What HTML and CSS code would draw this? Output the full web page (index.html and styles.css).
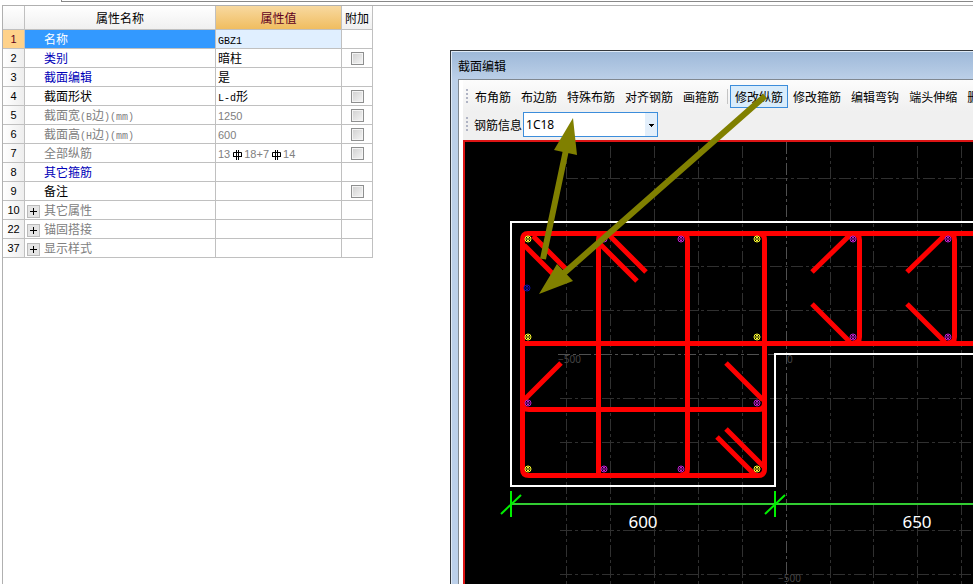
FILE: index.html
```html
<!DOCTYPE html>
<html lang="zh-CN">
<head>
<meta charset="utf-8">
<title>截面编辑</title>
<link rel="stylesheet" href="styles.css">
</head>
<body>
<div class="tabstrip"></div>
<main class="workspace">
  <section class="properties">
    <table class="grid">
      <colgroup><col class="c-num"><col class="c-name"><col class="c-value"><col class="c-extra"></colgroup>
      <thead>
        <tr><th></th><th>属性名称</th><th class="active">属性值</th><th>附加</th></tr>
      </thead>
      <tbody>
        <tr class="selected"><th>1</th><td class="name">名称</td><td class="value"><span class="code">GBZ1</span></td><td></td></tr>
        <tr><th>2</th><td class="name key">类别</td><td class="value">暗柱</td><td class="extra"><input type="checkbox" aria-label="附加 类别"></td></tr>
        <tr><th>3</th><td class="name key">截面编辑</td><td class="value">是</td><td></td></tr>
        <tr><th>4</th><td class="name">截面形状</td><td class="value"><span class="code">L-d</span>形</td><td class="extra"><input type="checkbox" aria-label="附加 截面形状"></td></tr>
        <tr class="muted"><th>5</th><td class="name">截面宽<span class="code">(B</span>边<span class="code">)(mm)</span></td><td class="value"><span class="num">1250</span></td><td class="extra"><input type="checkbox" aria-label="附加 截面宽"></td></tr>
        <tr class="muted"><th>6</th><td class="name">截面高<span class="code">(H</span>边<span class="code">)(mm)</span></td><td class="value"><span class="num">600</span></td><td class="extra"><input type="checkbox" aria-label="附加 截面高"></td></tr>
        <tr class="muted"><th>7</th><td class="name">全部纵筋</td><td class="value"><span class="num">13<svg class="rebar" viewBox="0 0 14 10"><path d="M3.500 2.500H11.500V6.500H3.500ZM6.500 0V10M8.500 0V10M3 6.500H12"/></svg>18+7<svg class="rebar" viewBox="0 0 14 10"><path d="M3.500 2.500H11.500V6.500H3.500ZM6.500 0V10M8.500 0V10M3 6.500H12"/></svg>14</span></td><td class="extra"><input type="checkbox" aria-label="附加 全部纵筋"></td></tr>
        <tr><th>8</th><td class="name key">其它箍筋</td><td></td><td></td></tr>
        <tr><th>9</th><td class="name">备注</td><td></td><td class="extra"><input type="checkbox" aria-label="附加 备注"></td></tr>
        <tr class="muted"><th>10</th><td class="group"><button class="expand" aria-label="展开"></button>其它属性</td><td></td><td></td></tr>
        <tr class="muted"><th>22</th><td class="group"><button class="expand" aria-label="展开"></button>锚固搭接</td><td></td><td></td></tr>
        <tr class="muted"><th>37</th><td class="group"><button class="expand" aria-label="展开"></button>显示样式</td><td></td><td></td></tr>
      </tbody>
    </table>
  </section>

  <section class="window">
    <h1 class="title">截面编辑</h1>
    <div class="client">
      <div class="toolbar">
        <i class="grip"></i>
        <button>布角筋</button><button>布边筋</button><button>特殊布筋</button><button>对齐钢筋</button><button>画箍筋</button>
        <i class="separator"></i>
        <button class="pressed">修改纵筋</button><button>修改箍筋</button><button>编辑弯钩</button><button>端头伸缩</button><button>删</button>
      </div>
      <div class="toolbar second">
        <i class="grip"></i>
        <label for="bar-info">钢筋信息</label>
        <select id="bar-info"><option>1C18</option></select>
      </div>
      <div class="canvas">
        <svg class="drawing" viewBox="465 142 508 442" preserveAspectRatio="xMinYMin slice">
          <defs>
            <g id="bar"><circle r="3" fill="#000" stroke="currentColor"/><path d="M-2 0H2M-1 -1.500H1M-1 1.500H1" stroke="currentColor" fill="none"/></g>
          </defs>
          <g class="guides">
            <path d="M566.500 146V584M610.500 146V584M654.500 146V584M698.500 146V584M742.500 146V584M830.500 146V584M873.500 146V584M917.500 146V584M961.500 146V584"/>
            <path d="M566 178.500H973M560 266.500H973M560 310.500H973M560 398.500H973M560 442.500H973M560 530.500H973M560 574.500H973"/>
            <path class="axis" d="M786.500 142V584M558 354.500H775"/>
          </g>
          <g class="scale">
            <text x="558" y="363">−500</text><text x="787" y="363">0</text><text x="778" y="582">−500</text>
          </g>
          <path class="outline" d="M980 222H511V486H775V354H980"/>
          <g class="stirrups">
            <path d="M980 233.500H528Q522.500 233.500 522.500 240V469Q522.500 475.500 529 475.500H758Q764.500 475.500 764.500 469V240Q764.500 233.500 758 233.500"/>
            <path d="M522.500 343.500H980M522.500 403Q522.500 409.500 529 409.500H758Q764.500 409.500 764.500 403"/>
            <path d="M604 233.500Q598.500 233.500 598.500 240V475M681 233.500Q687.500 233.500 687.500 240V469Q687.500 475 681 475M853 233.500Q859.500 233.500 859.500 240V337Q859.500 343 853 343M948 233.500Q954.500 233.500 954.500 240V337Q954.500 343 948 343"/>
            <path d="M533 236L567 270M524 245L554 275M608 234L646 272M600 244L637 281M851 234L812 272M946 234L907 272M812 304L850 342M907 304L945 342M523 401L561 363M726 363L763 400M726 429L764 467M717 437L755 475"/>
          </g>
          <g color="#ffff30"><use href="#bar" x="528" y="239"/><use href="#bar" x="757" y="239"/><use href="#bar" x="528" y="337"/><use href="#bar" x="757" y="337"/><use href="#bar" x="528" y="469"/><use href="#bar" x="757" y="469"/></g>
          <g color="#c020d0"><use href="#bar" x="604" y="239"/><use href="#bar" x="681" y="239"/><use href="#bar" x="853" y="239"/><use href="#bar" x="948" y="239"/><use href="#bar" x="853" y="337"/><use href="#bar" x="948" y="337"/><use href="#bar" x="528" y="403"/><use href="#bar" x="757" y="403"/><use href="#bar" x="604" y="469"/><use href="#bar" x="681" y="469"/></g>
          <g color="#1010b0"><use href="#bar" x="527" y="288"/></g>
          <g class="dimension">
            <path d="M511 504H980" stroke="#32cd32"/>
            <path d="M511 491V517M501 514L521 495M775 491V517M765 514L785 495"/>
            <text x="643" y="528">600</text><text x="917" y="528">650</text>
          </g>
        </svg>
      </div>
    </div>
    <svg class="arrows" viewBox="450 50 523 534" preserveAspectRatio="xMinYMin slice" aria-hidden="true">
      <path class="shaft" d="M543 259L566 150M765 96L563 274"/>
      <path class="head" d="M573 118L577 155L554 150ZM539 294L557 264L573 281Z"/>
    </svg>
  </section>
</main>
</body>
</html>
```
FILE: styles.css
```css
* { box-sizing: border-box; }

body {
  margin: 0;
  height: 100vh;
  display: flex;
  flex-direction: column;
  overflow: hidden;
  background: #fff;
  color: #000;
  font: 12px/18px "Noto Sans CJK SC", sans-serif;
}

.tabstrip {
  flex: none;
  height: 2px;
  margin: 0 0 3px 61px;
  border-left: 1px solid #888;
  border-bottom: 1px solid #888;
}

.workspace {
  flex: 1;
  min-height: 0;
  display: flex;
  margin-left: 2px;
  border-left: 1px solid #b0b0b0;
  border-top: 1px solid #b0b0b0;
}

/* Property table */
.properties { flex: none; width: 447px; }

.grid {
  width: 370px;
  table-layout: fixed;
  border-collapse: separate;
  border-spacing: 0;
}

.c-num { width: 22px; }
.c-name { width: 191px; }
.c-value { width: 126px; }
.c-extra { width: 31px; }

.grid th, .grid td {
  height: 19px;
  padding: 0;
  border-right: 1px solid #c0c0c0;
  border-bottom: 1px solid #c0c0c0;
  font-weight: normal;
  line-height: 16px;
  text-align: left;
  white-space: nowrap;
}

.grid thead th {
  height: 24px;
  text-align: center;
  background: linear-gradient(#fff, #f0f0f0);
}

.grid thead th.active {
  color: #600020;
  background: linear-gradient(#f8d9a0, #f0bd60);
}

.grid tbody th {
  text-align: center;
  background: linear-gradient(90deg, #fff, #eee);
  font-family: "Liberation Sans", sans-serif;
  font-size: 11px;
}

.grid td.name { padding-left: 19px; }
.grid .key { color: #0000b8; }
.grid .value { padding-left: 2px; }
.grid .muted td { color: #808080; }
.grid td.extra { text-align: center; }

.grid .selected th { background: #ffd28a; color: #600020; }
.grid .selected td.name { background: #3399ff; color: #fff; }
.grid .selected td.value { background: #e0efff; }

.code { font: 10px/8px "Liberation Mono", monospace; }
.num { font: 11px/8px "Liberation Sans", sans-serif; }

.rebar { width: 14px; height: 10px; margin: -1px 0; vertical-align: -1px; }
.rebar path { fill: none; stroke: #000; }

.extra input {
  appearance: none;
  display: block;
  width: 13px;
  height: 13px;
  margin: 0 auto;
  border: 1px solid #8e8f8f;
  background: linear-gradient(135deg, #cfcfcf, #f6f6f6);
  box-shadow: inset 0 0 0 1px #f4f4f4;
}

.grid td.group { padding-left: 2px; }

.expand {
  width: 13px;
  height: 13px;
  margin: 0 4px 0 0;
  padding: 0;
  vertical-align: -2px;
  border: 1px solid #bbb;
  background:
    linear-gradient(#000, #000) center / 7px 1px no-repeat,
    linear-gradient(#000, #000) center / 1px 7px no-repeat,
    #e4e4e4;
}

/* Section editor window */
.window {
  position: relative;
  flex: 1;
  min-width: 0;
  display: flex;
  flex-direction: column;
  margin-top: 44px;
  padding-left: 7px;
  overflow: hidden;
  border: solid #33373c;
  border-width: 1px 0 0 1px;
  background: linear-gradient(#9db8d8, #bcd0e8 29px, #bcd0ea);
  box-shadow: inset 1px 1px #dfeaf6;
}

.title {
  flex: none;
  margin: 0;
  height: 28px;
  font-size: 12px;
  line-height: 30px;
  font-weight: normal;
}

.client {
  flex: 1;
  min-height: 0;
  display: flex;
  flex-direction: column;
  padding-left: 4px;
  border: solid #808890;
  border-width: 1px 0 0 1px;
  background: #fff;
}

.toolbar {
  flex: none;
  display: flex;
  align-items: center;
  height: 31px;
  padding: 2px 0 0 3px;
  overflow: hidden;
  background: linear-gradient(#fcfcfc, #f0f0f0);
}

.toolbar.second { height: 29px; padding: 0 0 2px 3px; background: #f0f0f0; }

.grip {
  flex: none;
  width: 2px;
  height: 15px;
  margin-right: 2px;
  background: repeating-linear-gradient(#b0b4c4 0 2px, transparent 2px 4px);
}

.toolbar button {
  flex: none;
  height: 23px;
  padding: 0 4px;
  border: 1px solid transparent;
  background: none;
  color: #000;
  font: inherit;
  line-height: 20px;
}

.toolbar button.pressed { border-color: #3c8ddb; background: #d9ecfb; }

.separator {
  flex: none;
  width: 1px;
  height: 15px;
  margin: 0 2px 0 3px;
  background: #c4c4c4;
}

.second label { flex: none; margin: 0 1px 0 4px; }

.second select {
  appearance: none;
  width: 135px;
  height: 25px;
  padding: 0 14px 0 2px;
  border: 1px solid #3c8ddb;
  border-radius: 0;
  color: #000;
  font: 12px/20px "Noto Sans", sans-serif;
  background:
    conic-gradient(from 315deg at 50% 100%, #000 90deg, transparent 0) right 3px top 11px / 0 0 no-repeat,
    linear-gradient(#000, #000) right 5px top 13px / 1px 1px no-repeat,
    linear-gradient(#000, #000) right 4px top 12px / 3px 1px no-repeat,
    linear-gradient(#000, #000) right 3px top 11px / 5px 1px no-repeat,
    linear-gradient(#e3effb, #e3effb) right / 12px 100% no-repeat,
    #fff;
}

.canvas {
  flex: 1;
  min-height: 0;
  border: solid #dc1414;
  border-width: 2px 0 0 2px;
  background: #000;
}

.drawing { display: block; width: 100%; height: 100%; }

.guides { fill: none; stroke: #303030; stroke-dasharray: 12 3 3 3; }
.guides .axis { stroke: #505050; }
.scale { fill: #444; font: 10px "Noto Sans", sans-serif; }
.outline { fill: none; stroke: #fff; stroke-width: 2; }
.stirrups { fill: none; stroke: #f00; stroke-width: 5; stroke-linejoin: round; }
.dimension { fill: none; stroke: #00f000; stroke-width: 2; }
.dimension text {
  fill: #fff;
  stroke: none;
  text-anchor: middle;
  font: 17px "Noto Sans", sans-serif;
}

.arrows {
  position: absolute;
  top: -1px;
  left: -1px;
  width: calc(100% + 1px);
  height: calc(100% + 1px);
  pointer-events: none;
}

.arrows .shaft { fill: none; stroke: #808000; stroke-width: 6; }
.arrows .head { fill: #808000; }
```
